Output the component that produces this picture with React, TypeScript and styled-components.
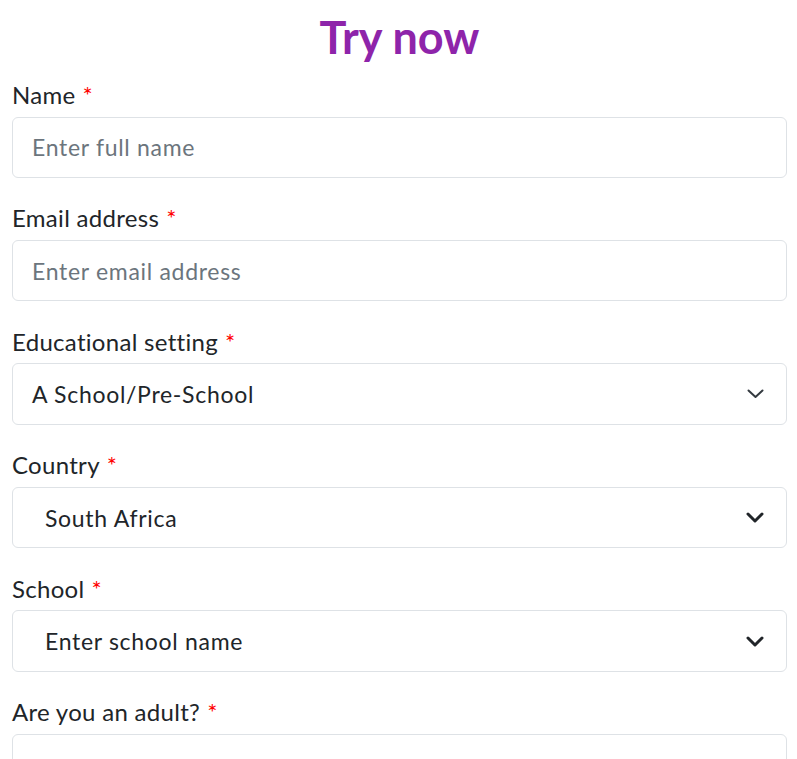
import * as React from "react"
import styled, { createGlobalStyle } from "styled-components"

const GlobalStyle = createGlobalStyle`
  html, body {
    margin: 0;
    padding: 0;
    background: #ffffff;
    overflow: hidden;
  }
  body {
    font-family: "Lato", "Noto Sans", sans-serif;
    color: #212529;
  }
  * {
    box-sizing: border-box;
  }
`

const PageWrapper = styled.div`
  padding: 11px 10px 0 12px;
`
const Title = styled.h1`
  margin: 0 0 11.5px;
  text-align: center;
  font-size: 45px;
  line-height: 53px;
  font-weight: 700;
  color: #8e24aa;
`
const Form = styled.form`
  display: flex;
  flex-direction: column;
`
const FieldGroup = styled.div`
  margin-bottom: 21.1px;
`
const Label = styled.label`
  display: block;
  padding-top: 1.5px;
  margin-bottom: 3.5px;
  font-size: 24px;
  line-height: 36px;
  letter-spacing: 0.3px;
  color: #212529;
`
const Required = styled.span`
  color: #ff0000;
  margin-left: 7px;
`
const TextInput = styled.input`
  display: block;
  width: 100%;
  height: 61.4px;
  padding: 0 19px;
  border: 1px solid #dee2e6;
  border-radius: 6px;
  font-family: inherit;
  font-size: 23px;
  letter-spacing: 0.7px;
  color: #212529;
  background: #ffffff;
  outline: none;

  &::placeholder {
    color: #6c757d;
    opacity: 1;
  }
`
const SelectBox = styled.div<{ $inset: number }>`
  display: flex;
  align-items: center;
  justify-content: space-between;
  height: 61.4px;
  padding: 0 22px 0 ${p => p.$inset}px;
  border: 1px solid #dee2e6;
  border-radius: 6px;
  font-size: 23px;
  letter-spacing: 0.7px;
  color: #212529;
  background: #ffffff;
`
const SelectValue = styled.span`
  white-space: nowrap;
`

function Chevron({ bold }: { bold?: boolean }) {
  return bold ? (
    <svg width="18" height="11" viewBox="0 0 18 11">
      <polyline points="2,2 9,9 16,2" fill="none" stroke="#212529" strokeWidth="3" strokeLinecap="round" strokeLinejoin="round" />
    </svg>
  ) : (
    <svg width="17" height="10" viewBox="0 0 17 10">
      <polyline points="1.5,1.5 8.5,8 15.5,1.5" fill="none" stroke="#343a40" strokeWidth="2" strokeLinecap="round" strokeLinejoin="round" />
    </svg>
  )
}

interface IFieldProps {
  label: string;
  children: React.ReactNode;
}

function Field({ label, children }: IFieldProps) {
  return (
    <FieldGroup>
      <Label>{label}<Required>*</Required></Label>
      {children}
    </FieldGroup>
  )
}

export default function App() {
  return (
    <PageWrapper>
      <GlobalStyle />
      <Title>Try now</Title>
      <Form onSubmit={e => e.preventDefault()}>
        <Field label="Name">
          <TextInput placeholder="Enter full name" />
        </Field>
        <Field label="Email address">
          <TextInput placeholder="Enter email address" />
        </Field>
        <Field label="Educational setting">
          <SelectBox $inset={19}>
            <SelectValue>A School/Pre-School</SelectValue>
            <Chevron />
          </SelectBox>
        </Field>
        <Field label="Country">
          <SelectBox $inset={32}>
            <SelectValue>South Africa</SelectValue>
            <Chevron bold />
          </SelectBox>
        </Field>
        <Field label="School">
          <SelectBox $inset={32}>
            <SelectValue>Enter school name</SelectValue>
            <Chevron bold />
          </SelectBox>
        </Field>
        <Field label="Are you an adult?">
          <TextInput />
        </Field>
      </Form>
    </PageWrapper>
  )
}
